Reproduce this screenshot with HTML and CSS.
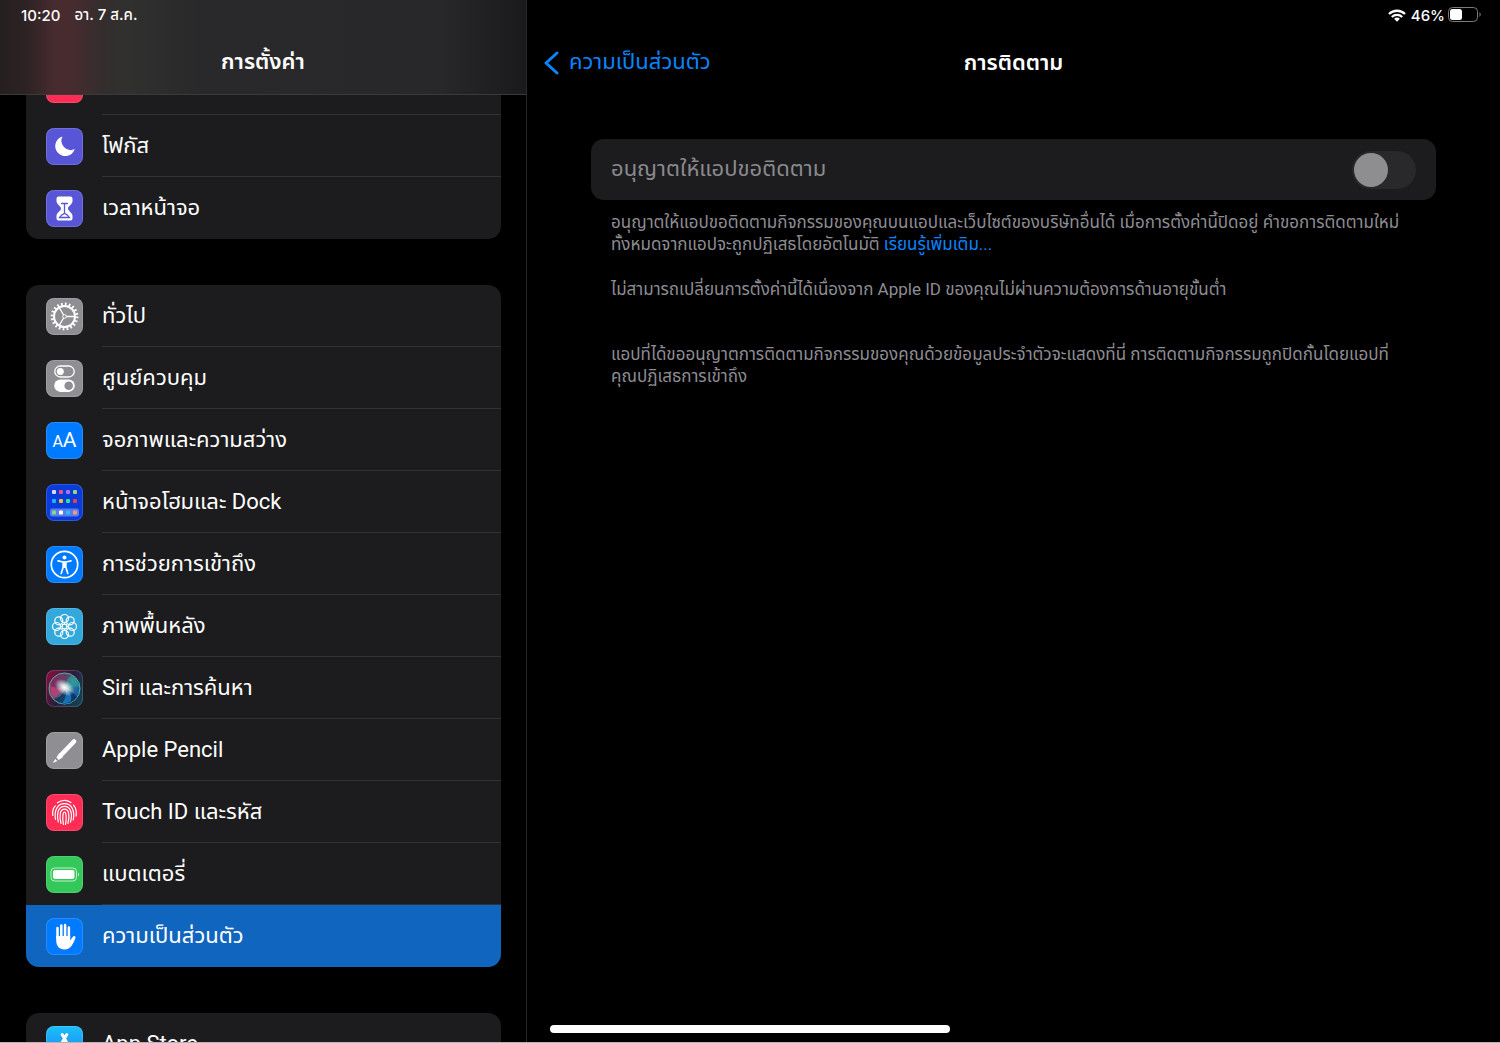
FILE: index.html
```html
<!DOCTYPE html>
<html lang="th">

<head>
    <meta charset="UTF-8">
    <meta name="viewport" content="width=device-width, initial-scale=1.0">
    <title>การตั้งค่า</title>
    <link rel="stylesheet" href="styles.css">
</head>

<body>
    <div class="wrap">
        <aside class="sidebar">
            <header class="side-header">
                <div class="status">
                    <span>10:20</span>
                    <span class="date">อา. 7 ส.ค.</span>
                </div>
                <h1 class="title">การตั้งค่า</h1>
            </header>

            <nav class="menu">
                <ul class="group group-first">
                    <li><a href="#"><span class="icon red"></span><span class="label"></span></a></li>
                    <li><a href="#">
                        <svg class="icon purple" viewBox="0 0 37 37">
                            <path fill="#fff" d="M16.500 8.500a10 10 0 1 0 12.300 12.600A9.300 9.300 0 0 1 16.500 8.500z" />
                        </svg>
                        <span class="label">โฟกัส</span></a></li>
                    <li><a href="#">
                        <svg class="icon purple" viewBox="0 0 37 37">
                            <path fill="#fff" d="M12.500 6.500h12q2 0 2 2v2.500c0 3.500-4.500 5-4.500 7.500s4.500 4 4.500 7.500v2.500q0 2-2 2h-12q-2 0-2-2V26c0-3.500 4.500-5 4.500-7.500S10.500 14.500 10.500 11V8.500q0-2 2-2z" />
                            <path fill="none" stroke="#5856d6" stroke-width="1.300" stroke-linecap="round" d="M15.500 13.500h6M18.500 14v9M13.500 27.500q2-3 5-4.200q3 1.200 5 4.200z" />
                        </svg>
                        <span class="label">เวลาหน้าจอ</span></a></li>
                </ul>

                <ul class="group">
                    <li><a href="#">
                        <svg class="icon grey" viewBox="0 0 37 37" fill="none" stroke="#fff">
                            <circle cx="18.500" cy="18.500" r="12.500" stroke-width="2.800" stroke-dasharray="1.700 2.227" />
                            <circle cx="18.500" cy="18.500" r="10.500" stroke-width="2" />
                            <circle cx="18.500" cy="18.500" r="1.800" fill="#8e8e93" stroke-width="1" />
                            <path stroke-width="1.300" d="M20 18.500h9M17.600 17l-4.500-7.600M17.600 20l-4.500 7.600" />
                        </svg>
                        <span class="label">ทั่วไป</span></a></li>
                    <li><a href="#">
                        <svg class="icon grey" viewBox="0 0 37 37">
                            <rect x="8.800" y="6" width="19.400" height="11" rx="5.500" fill="none" stroke="#fff" stroke-width="1.300" />
                            <circle cx="14.300" cy="11.500" r="3.500" fill="#fff" />
                            <rect x="8.200" y="19.500" width="20.600" height="12.400" rx="6.200" fill="#fff" />
                            <circle cx="22.700" cy="25.700" r="4.300" fill="#8e8e93" />
                        </svg>
                        <span class="label">ศูนย์ควบคุม</span></a></li>
                    <li><a href="#">
                        <span class="icon blue letters"><small>A</small>A</span>
                        <span class="label">จอภาพและความสว่าง</span></a></li>
                    <li><a href="#">
                        <svg class="icon navy" viewBox="0 0 37 37">
                            <rect x="4" y="24.500" width="29" height="8" rx="2" fill="#5c7cec" />
                            <rect x="6" y="6" width="4" height="4" rx="1" fill="#d8dcf0" />
                            <rect x="13" y="6" width="4" height="4" rx="1" fill="#f0507c" />
                            <rect x="20" y="6" width="4" height="4" rx="1" fill="#b070ff" />
                            <rect x="27" y="6" width="4" height="4" rx="1" fill="#9ad870" />
                            <rect x="6" y="15" width="4" height="4" rx="1" fill="#1cb4f8" />
                            <rect x="13" y="15" width="4" height="4" rx="1" fill="#f8bc28" />
                            <rect x="20" y="15" width="4" height="4" rx="1" fill="#30dca0" />
                            <rect x="27" y="15" width="4" height="4" rx="1" fill="#f03c50" />
                            <rect x="6" y="26.500" width="4" height="4" rx="1" fill="#78e088" />
                            <rect x="13" y="26.500" width="4" height="4" rx="1" fill="#fff" />
                            <rect x="20" y="26.500" width="4" height="4" rx="1" fill="#20c4f8" />
                            <rect x="27" y="26.500" width="4" height="4" rx="1" fill="#f0a070" />
                        </svg>
                        <span class="label">หน้าจอโฮมและ Dock</span></a></li>
                    <li><a href="#">
                        <svg class="icon blue" viewBox="0 0 37 37">
                            <circle cx="18.500" cy="18.500" r="13.200" fill="none" stroke="#fff" stroke-width="1.700" />
                            <circle cx="18.500" cy="11.500" r="2" fill="#fff" />
                            <path fill="none" stroke="#fff" stroke-width="1.700" stroke-linecap="round" stroke-linejoin="round" d="M12 14.800l5 1.200h3l5-1.200M17.200 16v5l-2 6.500M19.800 16v5l2 6.500" />
                            <path fill="#fff" d="M16.800 15.500h3.400v6.500h-3.400z" />
                        </svg>
                        <span class="label">การช่วยการเข้าถึง</span></a></li>
                    <li><a href="#">
                        <svg class="icon cyan" viewBox="0 0 37 37" fill="none" stroke="#fff" stroke-width="1.200">
                            <circle cx="18.500" cy="10.500" r="4" />
                            <circle cx="24.200" cy="12.800" r="4" />
                            <circle cx="26.500" cy="18.500" r="4" />
                            <circle cx="24.200" cy="24.200" r="4" />
                            <circle cx="18.500" cy="26.500" r="4" />
                            <circle cx="12.800" cy="24.200" r="4" />
                            <circle cx="10.500" cy="18.500" r="4" />
                            <circle cx="12.800" cy="12.800" r="4" />
                            <circle cx="18.500" cy="18.500" r="2.400" />
                            <path d="M18.500 14.500v1.600M18.500 20.900v1.600M14.500 18.500h1.600M20.900 18.500h1.600M15.600 15.600l1.200 1.200M20.200 20.200l1.200 1.200M15.600 21.400l1.200-1.200M20.200 16.800l1.200-1.200" />
                        </svg>
                        <span class="label">ภาพพื้นหลัง</span></a></li>
                    <li><a href="#">
                        <svg class="icon siri" viewBox="0 0 37 37">
                            <defs>
                                <linearGradient id="orb" x1="0" y1="0.200" x2="1" y2="0.800">
                                    <stop offset="0" stop-color="#981c58" />
                                    <stop offset="0.400" stop-color="#584868" />
                                    <stop offset="0.600" stop-color="#2e8494" />
                                    <stop offset="1" stop-color="#0c4cb0" />
                                </linearGradient>
                                <radialGradient id="glow">
                                    <stop offset="0" stop-color="#fff" />
                                    <stop offset="0.300" stop-color="#fff" stop-opacity="0.800" />
                                    <stop offset="1" stop-color="#fff" stop-opacity="0" />
                                </radialGradient>
                            </defs>
                            <circle cx="18.500" cy="18.500" r="15.500" fill="url(#orb)" stroke="#58b4a4" stroke-width="1" />
                            <path fill="#0c2450" opacity="0.700" d="M19 19q9 3 12 8q-5 7-13 7q-6-1-10-5q8-2 11-10z" />
                            <path fill="#1888d8" opacity="0.700" d="M20 19q7 6 5 12q-4 3-9 3q5-7 4-15z" />
                            <path fill="#f04888" opacity="0.500" d="M18 18q-9 0-14-2q0 9 4 12q6-3 10-10z" />
                            <path fill="#38c0a8" opacity="0.350" d="M19 17q1-8 6-11q6 3 8 10q-7 3-14 1z" />
                            <ellipse cx="18.500" cy="17.500" rx="11" ry="7" fill="url(#glow)" transform="rotate(35 18.500 17.500)" />
                        </svg>
                        <span class="label">Siri และการค้นหา</span></a></li>
                    <li><a href="#">
                        <svg class="icon grey" viewBox="0 0 37 37">
                            <path stroke="#fff" stroke-width="4.600" stroke-linecap="round" d="M28 9.500L15 23" />
                            <path fill="#fff" d="M13.200 21.200l3.900 3.900-4.400 3-2.300-2.500zM9.300 26.900l2 2-4.500 2z" />
                        </svg>
                        <span class="label">Apple Pencil</span></a></li>
                    <li><a href="#">
                        <svg class="icon red" viewBox="0 0 37 37" fill="none" stroke="#fff" stroke-width="1.200" stroke-linecap="round">
                            <path d="M11.500 8.800a12 12 0 0 1 13.500-.3" />
                            <path d="M6.800 21.500c-.6-4.500.5-7.500 2.500-9.600M27.500 11.200c2.600 2.900 3.200 6.500 2.600 10.800" />
                            <path d="M9.500 25.500c-1.500-8.500 1.500-15.800 9-15.800s10.500 7.300 8.700 16.300" />
                            <path d="M12.300 28c-2-9 .2-15.600 6.200-15.600s8.400 7 6 15.800" />
                            <path d="M15 29.500c-2-8-1-14.300 3.500-14.300S24 21.500 21.900 29.500" />
                            <path d="M17.500 30.500c-1.400-7-.6-12.500 1-12.500s2.300 5.500 1 12.500" />
                        </svg>
                        <span class="label">Touch ID และรหัส</span></a></li>
                    <li><a href="#">
                        <svg class="icon green" viewBox="0 0 37 37">
                            <rect x="5" y="12" width="25.500" height="13" rx="3.500" fill="none" stroke="#fff" stroke-opacity="0.700" />
                            <rect x="7" y="14" width="21.500" height="9" rx="2" fill="#fff" />
                            <path fill="#fff" opacity="0.800" d="M32 16.500q2 2 0 4z" />
                        </svg>
                        <span class="label">แบตเตอรี่</span></a></li>
                    <li class="active"><a href="#" aria-current="page">
                        <svg class="icon blue" viewBox="0 0 37 37" fill="none" stroke="#fff" stroke-linecap="round">
                            <path stroke-width="2.500" d="M11.500 20V10M15.300 19V7.500M19.100 19V7M22.900 20V9.500" />
                            <path fill="#fff" stroke="none" d="M10.200 18h14v4.500l2.500-3.600c1.100-1.500 3.400-.7 2.700 1.100C27.500 25 25 31.500 18.500 31.500c-5.500 0-8.300-4-8.300-9z" />
                        </svg>
                        <span class="label">ความเป็นส่วนตัว</span></a></li>
                </ul>

                <ul class="group">
                    <li><a href="#">
                        <svg class="icon store" viewBox="0 0 37 37" fill="none" stroke="#fff" stroke-width="3" stroke-linecap="round">
                            <path d="M16.200 8.500L26.500 27M20.800 8.500L11 25.500M7.500 22h14M27 22h3" />
                        </svg>
                        <span class="label">App Store</span></a></li>
                </ul>
            </nav>
        </aside>

        <main class="detail">
            <div class="status status-right">
                <svg class="wifi" viewBox="0 0 18 13" fill="none" stroke="#fff" stroke-width="2.300">
                    <path d="M1 5a11.500 11.500 0 0 1 16 0M3.800 8a7.500 7.500 0 0 1 10.400 0" />
                    <path fill="#fff" stroke="none" d="M9 8.600a4.200 4.200 0 0 1 2.900 1.200L9 12.800 6.100 9.800A4.200 4.200 0 0 1 9 8.600z" />
                </svg>
                <span>46%</span>
                <svg class="battery" viewBox="0 0 34 16">
                    <rect x="0.500" y="0.500" width="29" height="14" rx="4" fill="none" stroke="#7c7c7c" />
                    <rect x="2" y="2" width="12" height="11" rx="2.500" fill="#fff" />
                    <path fill="#7c7c7c" d="M31.500 5q2.500 2.500 0 5z" />
                </svg>
            </div>
            <header class="detail-header">
                <a class="back" href="#">
                    <svg viewBox="0 0 15 24" fill="none" stroke="currentColor" stroke-width="3" stroke-linecap="round" stroke-linejoin="round">
                        <path d="M13 2L2 12l11 10" />
                    </svg>
                    ความเป็นส่วนตัว
                </a>
                <h2 class="title">การติดตาม</h2>
            </header>

            <section class="content">
                <div class="card">
                    <label for="allow">อนุญาตให้แอปขอติดตาม</label>
                    <input type="checkbox" class="switch" id="allow" disabled>
                </div>
                <div class="notes">
                    <p>อนุญาตให้แอปขอติดตามกิจกรรมของคุณบนแอปและเว็บไซต์ของบริษัทอื่นได้ เมื่อการตั้งค่านี้ปิดอยู่ คำขอการติดตามใหม่<br>ทั้งหมดจากแอปจะถูกปฏิเสธโดยอัตโนมัติ <a href="#">เรียนรู้เพิ่มเติม...</a></p>
                    <p>ไม่สามารถเปลี่ยนการตั้งค่านี้ได้เนื่องจาก Apple ID ของคุณไม่ผ่านความต้องการด้านอายุขั้นต่ำ</p>
                    <p class="last">แอปที่ได้ขออนุญาตการติดตามกิจกรรมของคุณด้วยข้อมูลประจำตัวจะแสดงที่นี่ การติดตามกิจกรรมถูกปิดกั้นโดยแอปที่<br>คุณปฏิเสธการเข้าถึง</p>
                </div>
            </section>
        </main>
        <div class="home-bar"></div>
    </div>
</body>

</html>
```
FILE: styles.css
```css
* {
    box-sizing: border-box;
    margin: 0;
    padding: 0;
}

body {
    background: #000;
    color: #fff;
    font-family: Roboto, "Noto Sans Thai", "Noto Sans", sans-serif;
    font-size: 22px;
}

a {
    color: #0a84ff;
    text-decoration: none;
}

.wrap {
    position: relative;
    display: flex;
    height: 100vh;
    overflow: hidden;
    border-bottom: 1px solid #b4b4b4;
}

/* left side */
.sidebar {
    display: flex;
    flex-direction: column;
    flex: 0 0 527px;
    border-right: 1px solid #29292b;
}

.side-header {
    flex: none;
    height: 95px;
    background: linear-gradient(90deg, #251f20 0, #2c2223 24px, #482b2f 56px, #482b2f 70px, #352d2e 100px, #30302f 130px, #29292b 200px, #28282a 440px, #1a1a1c 100%);
    border-bottom: 1px solid #3a3a3c;
}

.status {
    display: flex;
    align-items: center;
    height: 30px;
    padding: 0 21px;
    font-family: Inter, "Noto Sans Thai", "Noto Sans", sans-serif;
    font-size: 15px;
    font-weight: 500;
}

.date {
    margin-left: 14px;
}

.title {
    font-size: 22px;
    font-weight: 600;
    line-height: 64px;
    text-align: center;
}

.menu {
    flex: 1;
    min-height: 0;
    padding: 0 25px 0 26px;
    overflow: hidden;
}

.group {
    margin-bottom: 46px;
    background: #1c1c1e;
    border-radius: 13px;
    list-style: none;
    overflow: hidden;
}

/* list is scrolled, the first row is under the header */
.group-first {
    margin-top: -42px;
}

.group a {
    display: flex;
    align-items: center;
    height: 62px;
    padding-left: 20px;
    color: #fff;
}

.icon {
    flex: none;
    width: 37px;
    height: 37px;
    margin-right: 19px;
    border-radius: 8px;
    box-shadow: inset 0 0 0 1px rgba(255, 255, 255, 0.15);
}

.label {
    flex: 1;
    height: 62px;
    line-height: 62px;
    border-bottom: 1px solid #323234;
    white-space: nowrap;
}

.group li:last-child .label {
    border-bottom: none;
}

.group .active {
    background: #1065bf;
}

.purple {
    background: #5856d6;
}

.grey {
    background: #8e8e93;
}

.blue {
    background: #007aff;
}

.navy {
    background: #0a3cdc;
}

.cyan {
    background: #32a8dc;
}

.red {
    background: #ff2d55;
}

.green {
    background: #34c759;
}

.siri {
    background: linear-gradient(120deg, #8c1040, #2c1c3c 50%, #0c4c58);
}

.store {
    background: linear-gradient(#1cc0fa, #1c78f0);
}

.letters {
    display: flex;
    justify-content: center;
    align-items: baseline;
    font-size: 21px;
    line-height: 37px;
}

.letters small {
    font-size: 16px;
}

/* right side */
.detail {
    flex: 1;
    min-width: 0;
}

.status-right {
    justify-content: flex-end;
    padding-right: 18px;
}

.wifi {
    width: 18px;
    height: 13px;
    margin-right: 5px;
}

.battery {
    width: 34px;
    height: 16px;
    margin-left: 3px;
}

.detail-header {
    display: grid;
    grid-template-columns: 1fr auto 1fr;
    align-items: center;
    height: 65px;
    padding: 0 17px;
}

.back {
    display: flex;
    align-items: center;
    gap: 10px;
}

.back svg {
    width: 15px;
    height: 24px;
}

.content {
    padding: 44px 64px;
}

.card {
    display: flex;
    align-items: center;
    justify-content: space-between;
    height: 61px;
    padding: 0 20px;
    background: #1c1c1e;
    border-radius: 13px;
    color: #8a8a8e;
}

.switch {
    appearance: none;
    width: 64px;
    height: 38px;
    padding: 2px;
    background: #29292c;
    border-radius: 19px;
}

.switch::before {
    content: "";
    display: block;
    width: 34px;
    height: 34px;
    background: #8e8e91;
    border-radius: 50%;
}

.notes {
    padding: 11px 20px;
    color: #8d8d93;
    font-size: 17px;
    line-height: 22px;
}

.notes p {
    margin-bottom: 23px;
}

.notes .last {
    margin-top: 43px;
}

.home-bar {
    position: absolute;
    bottom: 9px;
    left: 50%;
    width: 400px;
    height: 8px;
    margin-left: -200px;
    background: #fff;
    border-radius: 4px;
}
```
